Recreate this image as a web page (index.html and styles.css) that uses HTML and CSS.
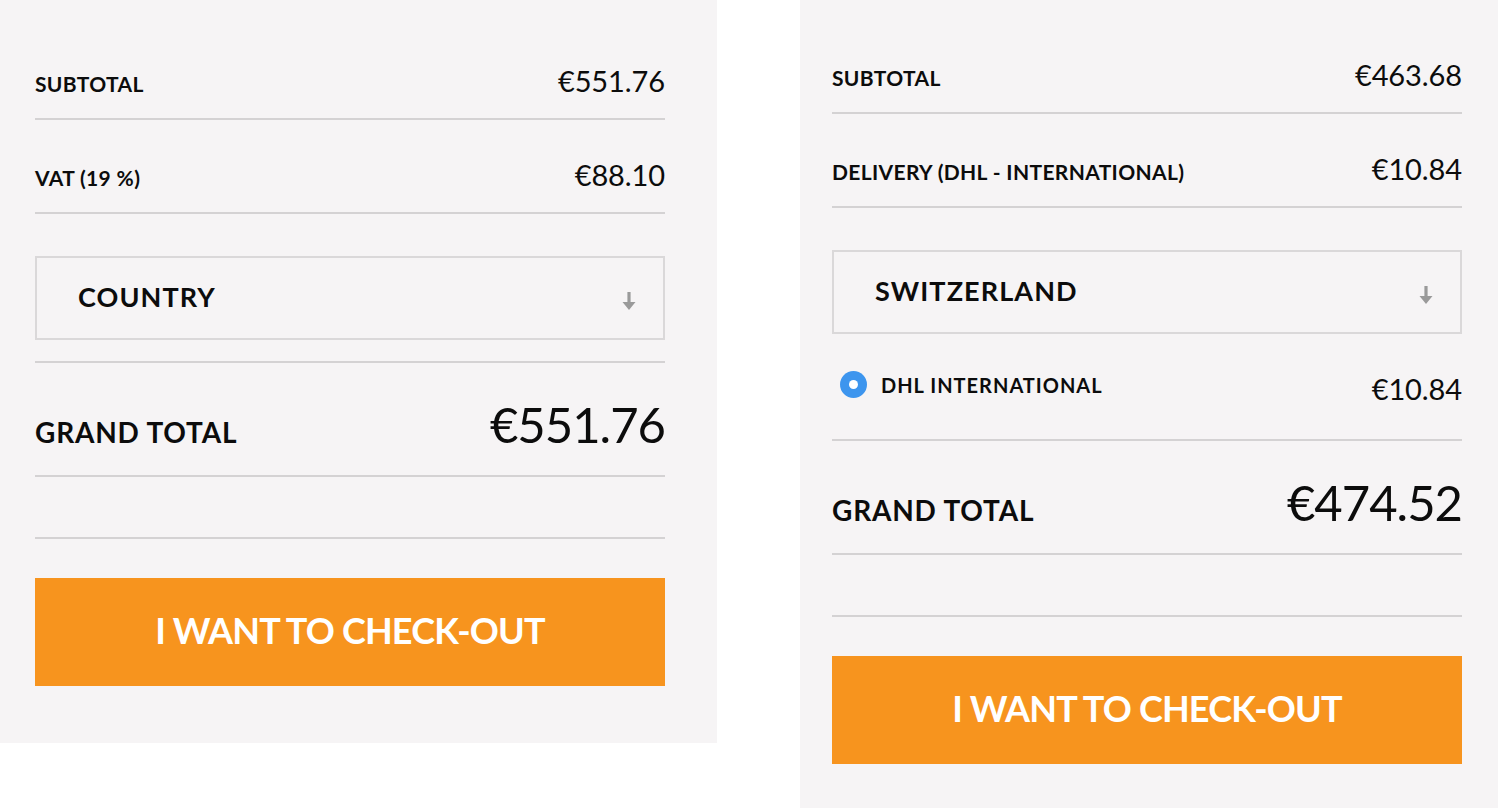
FILE: index.html
```html
<!DOCTYPE html>
<html lang="en">
<head>
<meta charset="utf-8">
<title>Cart totals</title>
<link rel="stylesheet" href="styles.css">
</head>
<body>
<div class="page">
  <section class="panel panel-left">
    <div class="row">
      <span class="label">SUBTOTAL</span>
      <span class="value">€551.76</span>
    </div>
    <div class="row">
      <span class="label">VAT (19 %)</span>
      <span class="value">€88.10</span>
    </div>
    <div class="select-wrap">
      <div class="select">
        <span class="select-text">COUNTRY</span>
        <svg class="arrow" width="16" height="20" viewBox="0 0 16 20"><path d="M8 1 V16" stroke="#9a9a9a" stroke-width="3.2" fill="none"/><path d="M1.5 11 L8 19 L14.5 11 Z" fill="#9a9a9a"/></svg>
      </div>
    </div>
    <div class="row row-grand">
      <span class="label-grand">GRAND TOTAL</span>
      <span class="value-grand">€551.76</span>
    </div>
    <div class="row row-empty"></div>
    <button class="checkout">I WANT TO CHECK-OUT</button>
  </section>

  <section class="panel panel-right">
    <div class="row">
      <span class="label">SUBTOTAL</span>
      <span class="value">€463.68</span>
    </div>
    <div class="row">
      <span class="label">DELIVERY (DHL - INTERNATIONAL)</span>
      <span class="value">€10.84</span>
    </div>
    <div class="select-wrap select-wrap-open">
      <div class="select">
        <span class="select-text">SWITZERLAND</span>
        <svg class="arrow" width="16" height="20" viewBox="0 0 16 20"><path d="M8 1 V16" stroke="#9a9a9a" stroke-width="3.2" fill="none"/><path d="M1.5 11 L8 19 L14.5 11 Z" fill="#9a9a9a"/></svg>
      </div>
    </div>
    <div class="row row-radio">
      <span class="radio-label"><span class="radio"></span>DHL INTERNATIONAL</span>
      <span class="value">€10.84</span>
    </div>
    <div class="row row-grand">
      <span class="label-grand">GRAND TOTAL</span>
      <span class="value-grand">€474.52</span>
    </div>
    <div class="row row-empty"></div>
    <button class="checkout">I WANT TO CHECK-OUT</button>
  </section>
</div>
</body>
</html>
```
FILE: styles.css
```css
* { box-sizing: border-box; }
html, body { margin: 0; padding: 0; background: #ffffff; }
body { font-family: Lato, "Liberation Sans", sans-serif; color: #0c0c0c; }

.page {
  display: flex;
  align-items: flex-start;
  width: 1498px;
  height: 808px;
  overflow: hidden;
}

.panel {
  background: #f6f4f5;
  display: flex;
  flex-direction: column;
}
.panel-left {
  width: 717px;
  height: 743px;
  padding: 26px 52px 0 35px;
}
.panel-right {
  width: 698px;
  height: 808px;
  margin-left: 83px;
  padding: 20px 36px 0 32px;
}

.row {
  display: flex;
  justify-content: space-between;
  align-items: baseline;
  height: 94px;
  padding-top: 40px;
  border-bottom: 2px solid #d4d2d3;
}

.label {
  font-weight: 700;
  font-size: 21px;
  letter-spacing: 0.35px;
  line-height: 30px;
}
.value {
  font-weight: 400;
  font-size: 29px;
  letter-spacing: -0.1px;
  line-height: 30px;
}

.select-wrap {
  padding-top: 42px;
  padding-bottom: 21px;
  border-bottom: 2px solid #d4d2d3;
}
.select-wrap-open {
  padding-bottom: 0;
  border-bottom: none;
}
.select {
  height: 84px;
  border: 2px solid #dad8d9;
  display: flex;
  align-items: center;
  justify-content: space-between;
  padding: 0 26px 0 41px;
}
.select-text {
  font-weight: 700;
  font-size: 27px;
  letter-spacing: 1.1px;
  padding-bottom: 4px;
}
.arrow { margin-top: 6px; }

.row-radio {
  height: 107px;
  padding-top: 0;
  align-items: center;
}
.radio-label {
  display: flex;
  align-items: center;
  font-weight: 700;
  font-size: 20px;
  letter-spacing: 1px;
  padding-bottom: 4px;
}
.radio {
  width: 27px;
  height: 27px;
  border-radius: 50%;
  background: #3d95ee;
  margin: 0 14px 0 8px;
  display: flex;
  align-items: center;
  justify-content: center;
}
.radio::after {
  content: "";
  width: 9px;
  height: 9px;
  border-radius: 50%;
  background: #ffffff;
}
.row-radio .value { padding-top: 4px; }

.row-grand {
  height: 114px;
  padding-top: 36px;
}
.label-grand {
  font-weight: 700;
  font-size: 28px;
  letter-spacing: 0.8px;
  line-height: 50px;
}
.value-grand {
  font-weight: 400;
  font-size: 49px;
  letter-spacing: -1px;
  line-height: 50px;
}

.row-empty {
  height: 62px;
  padding-top: 0;
}

.checkout {
  margin-top: 39px;
  height: 108px;
  width: 100%;
  border: none;
  background: #f7941e;
  color: #ffffff;
  font-family: Lato, "Liberation Sans", sans-serif;
  font-weight: 700;
  font-size: 36px;
  letter-spacing: -0.8px;
  padding: 0 0 4px;
  cursor: pointer;
}
```
